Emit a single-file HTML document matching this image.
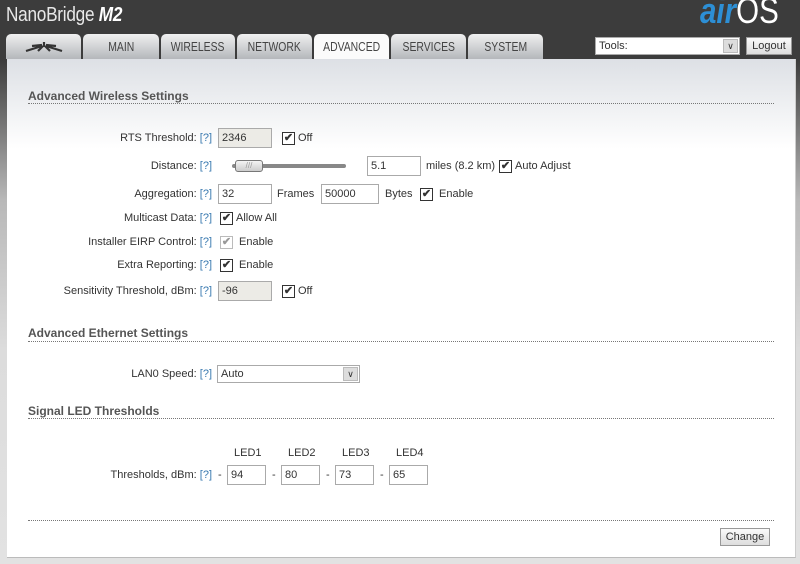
<!DOCTYPE html>
<html><head><meta charset="utf-8"><style>
*{margin:0;padding:0;box-sizing:border-box}
body{width:800px;height:564px;overflow:hidden;position:relative;font-family:"Liberation Sans",sans-serif;font-size:11px;color:#333;
background:linear-gradient(#3c3c3c 0,#3c3c3c 60px,#b8b8b8 200px,#dcdcdc 350px,#e2e2e2 100%)}
.a{position:absolute;white-space:nowrap}
.title{left:6px;top:4px;color:#e8e8e8;font-size:20px;letter-spacing:-.3px;transform:scaleX(.86);transform-origin:left}
.title b{font-style:italic;font-weight:bold;color:#fff}
.logo{left:700px;top:-10px;font-size:36px;transform:scaleX(.82);transform-origin:left}
.tab{position:absolute;top:34px;height:25px;background:linear-gradient(#f0f0f0,#b4b7bb);border-radius:5px 5px 0 0;
font-size:13px;color:#444;text-align:center;line-height:25px}
.tab span{display:inline-block;transform:scaleX(.8)}
.tab.on{background:#fbfbfb;color:#444}
.panel{position:absolute;left:7px;top:59px;width:789px;height:499px;background:linear-gradient(#dde0e5,#fff 90px,#fff);border-right:1px solid #ccc;border-bottom:1px solid #bbb}
.h{font-weight:bold;font-size:12px;color:#555}
.line{position:absolute;left:28px;width:746px;border-top:1px dotted #777}
.lbl{text-align:right;right:588px}
.q{color:#3a7ab0}
.in{position:absolute;height:20px;border:1px solid #aaa;background:#fff;padding-left:3px;line-height:18px;font-size:11px}
.in.g{background:#ecebe6}
.cb{position:absolute;width:13px;height:13px;border:1px solid #333;background:#fff;font-size:11px;line-height:11px;text-align:center;font-weight:bold}
.btn{position:absolute;border:1px solid #999;background:linear-gradient(#fafafa,#ddd);text-align:center;font-size:11px}
</style></head><body>
<div class="a title">NanoBridge <b>M2</b></div>
<div class="a logo"><span style="color:#2d8fd5;font-style:italic;font-weight:bold">air</span><span style="color:#fff">OS</span></div>
<div class="tab" style="left:6px;width:75px"><svg width="40" height="14" viewBox="0 0 40 14" style="margin-top:6px"><path d="M2 11 L18 6 M38 11 L22 6 M8 6 L18 5 M32 6 L22 5 M14 11 L19 6 M26 11 L21 6 M20 2 L20 7" stroke="#333" stroke-width="2.2" fill="none"/></svg></div>
<div class="tab" style="left:83px;width:76px"><span>MAIN</span></div>
<div class="tab" style="left:161px;width:74px"><span>WIRELESS</span></div>
<div class="tab" style="left:237px;width:75px"><span>NETWORK</span></div>
<div class="tab on" style="left:314px;width:75px"><span>ADVANCED</span></div>
<div class="tab" style="left:391px;width:75px"><span>SERVICES</span></div>
<div class="tab" style="left:468px;width:75px"><span>SYSTEM</span></div>
<div class="in" style="left:595px;top:37px;width:145px;height:18px;line-height:16px">Tools:<span style="position:absolute;right:1px;top:1px;width:15px;height:14px;background:#ddd;border:1px solid #bbb;font-size:9px;text-align:center;line-height:12px">&#8744;</span></div>
<div class="btn" style="left:746px;top:37px;width:46px;height:18px;line-height:16px">Logout</div>
<div class="panel"></div>
<div class="a h" style="left:28px;top:89px">Advanced Wireless Settings</div><div class="line" style="top:103px"></div>
<div class="a lbl" style="top:132px">RTS Threshold: <span class="q">[?]</span></div>
<div class="in g" style="left:218px;top:128px;width:54px">2346</div><div class="cb" style="left:282px;top:132px">✔</div><div class="a" style="left:298px;top:132px">Off</div>
<div class="a lbl" style="top:160px">Distance: <span class="q">[?]</span></div>
<div class="a" style="left:232px;top:160px;width:116px;height:12px"><div style="position:absolute;left:0;top:4px;width:114px;height:4px;background:#888;border-radius:2px"></div><div style="position:absolute;left:3px;top:0;width:28px;height:12px;background:linear-gradient(#f4f4f4,#ccc);border:1px solid #777;border-radius:3px;font-size:8px;color:#999;text-align:center;line-height:9px">///</div></div>
<div class="in" style="left:367px;top:156px;width:54px">5.1</div><div class="a" style="left:426px;top:160px">miles (8.2 km)</div><div class="cb" style="left:499px;top:160px">✔</div><div class="a" style="left:515px;top:160px">Auto Adjust</div>
<div class="a lbl" style="top:188px">Aggregation: <span class="q">[?]</span></div>
<div class="in" style="left:218px;top:184px;width:54px">32</div><div class="a" style="left:277px;top:188px">Frames</div>
<div class="in" style="left:321px;top:184px;width:58px">50000</div><div class="a" style="left:385px;top:188px">Bytes</div><div class="cb" style="left:420px;top:188px">✔</div><div class="a" style="left:439px;top:188px">Enable</div>
<div class="a lbl" style="top:212px">Multicast Data: <span class="q">[?]</span></div><div class="cb" style="left:220px;top:212px">✔</div><div class="a" style="left:236px;top:212px">Allow All</div>
<div class="a lbl" style="top:236px">Installer EIRP Control: <span class="q">[?]</span></div><div class="cb" style="left:220px;top:236px;border-color:#bbb;color:#999">✔</div><div class="a" style="left:239px;top:236px">Enable</div>
<div class="a lbl" style="top:259px">Extra Reporting: <span class="q">[?]</span></div><div class="cb" style="left:220px;top:259px">✔</div><div class="a" style="left:239px;top:259px">Enable</div>
<div class="a lbl" style="top:285px">Sensitivity Threshold, dBm: <span class="q">[?]</span></div>
<div class="in g" style="left:218px;top:281px;width:54px">-96</div><div class="cb" style="left:282px;top:285px">✔</div><div class="a" style="left:298px;top:285px">Off</div>
<div class="a h" style="left:28px;top:326px">Advanced Ethernet Settings</div><div class="line" style="top:341px"></div>
<div class="a lbl" style="top:368px">LAN0 Speed: <span class="q">[?]</span></div>
<div class="in" style="left:217px;top:365px;width:143px;height:18px;line-height:16px">Auto<span style="position:absolute;right:1px;top:1px;width:15px;height:14px;background:#ddd;border:1px solid #bbb;font-size:9px;text-align:center;line-height:12px">&#8744;</span></div>
<div class="a h" style="left:28px;top:404px">Signal LED Thresholds</div><div class="line" style="top:418px"></div>
<div class="a" style="left:234px;top:447px">LED1</div><div class="a" style="left:288px;top:447px">LED2</div><div class="a" style="left:342px;top:447px">LED3</div><div class="a" style="left:396px;top:447px">LED4</div>
<div class="a lbl" style="top:469px">Thresholds, dBm: <span class="q">[?]</span></div>
<div class="a" style="left:218px;top:469px">-</div><div class="in" style="left:227px;top:465px;width:39px">94</div>
<div class="a" style="left:272px;top:469px">-</div><div class="in" style="left:281px;top:465px;width:39px">80</div>
<div class="a" style="left:326px;top:469px">-</div><div class="in" style="left:335px;top:465px;width:39px">73</div>
<div class="a" style="left:380px;top:469px">-</div><div class="in" style="left:389px;top:465px;width:39px">65</div>
<div class="line" style="top:520px;left:28px"></div>
<div class="btn" style="left:720px;top:528px;width:50px;height:18px;line-height:16px">Change</div>
</body></html>
